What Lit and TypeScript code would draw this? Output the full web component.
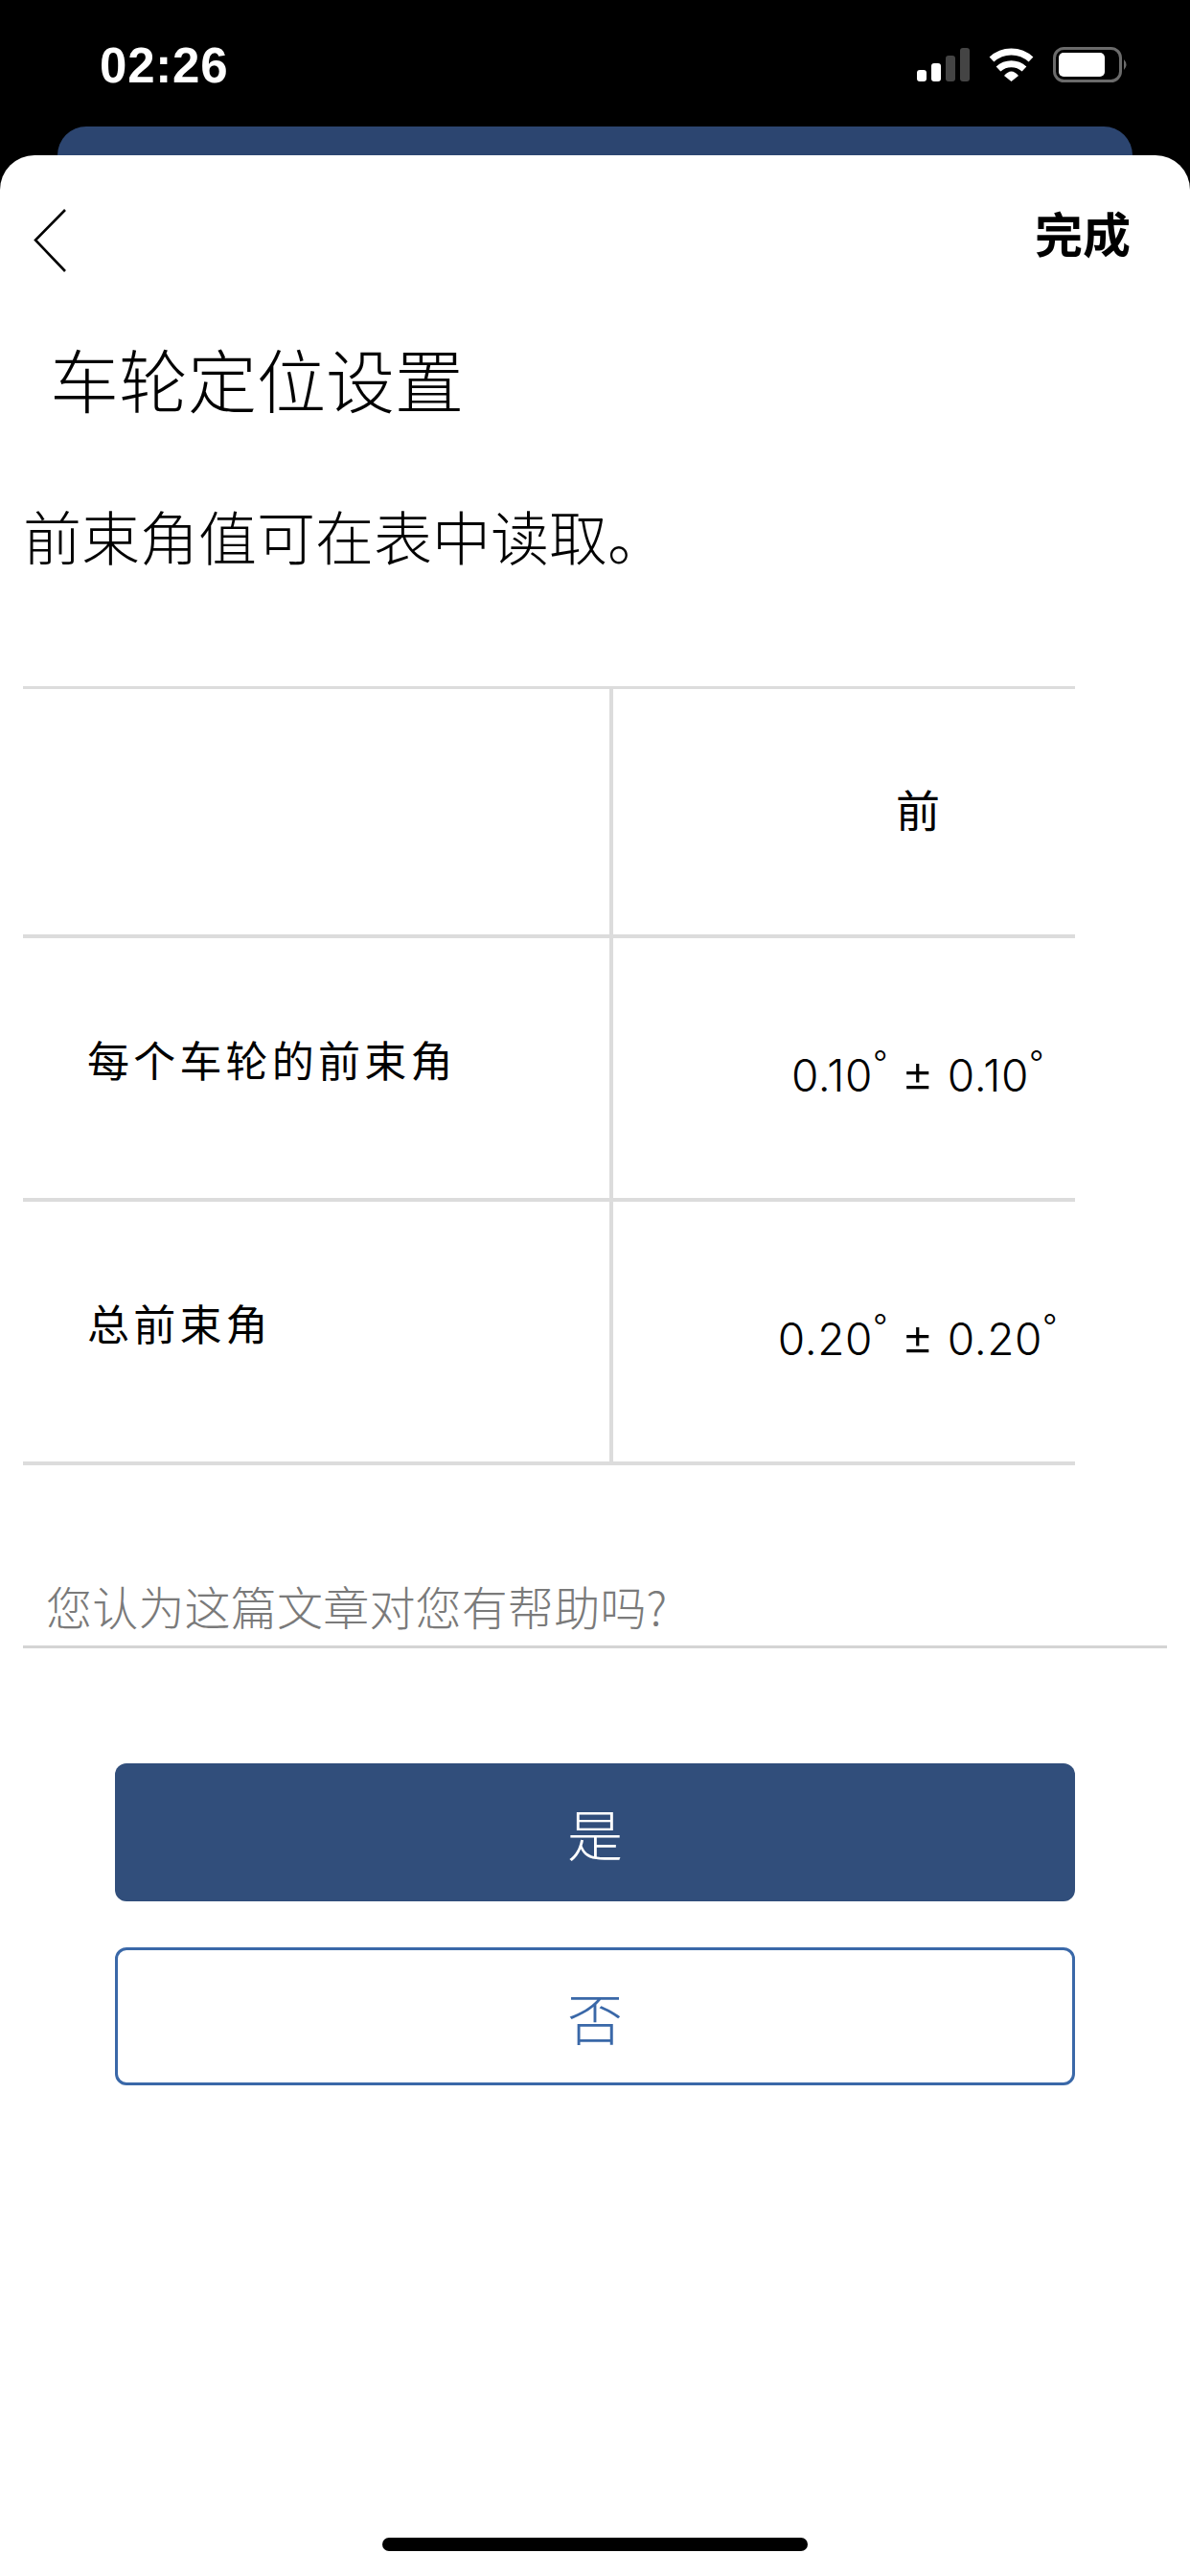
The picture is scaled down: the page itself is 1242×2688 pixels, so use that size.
import { LitElement, html, css } from "lit";
import { customElement } from "lit/decorators.js";

const statusIcons = html`<svg class="status-icons" width="221" height="37" viewBox="0 0 221 37">
  <rect x="0" y="24" width="10" height="12" rx="3" fill="#fff" />
  <rect x="15" y="17" width="10" height="19" rx="3" fill="#fff" />
  <rect x="30" y="9" width="10" height="27" rx="3" fill="#444" />
  <rect x="45" y="1" width="10" height="35" rx="3" fill="#444" />
  <path d="M78 13 A30 30 0 0 1 119 13" fill="none" stroke="#fff" stroke-width="7" />
  <path d="M85 23 A20 20 0 0 1 112 23" fill="none" stroke="#fff" stroke-width="7" />
  <path d="M91 30 Q98.5 21 106 30 L98.5 36 Z" fill="#fff" />
  <rect x="143.500" y="1.500" width="69" height="34" rx="10" fill="none" stroke="#6b6b6b" stroke-width="3" />
  <rect x="148" y="6" width="48" height="25" rx="5" fill="#fff" />
  <path d="M216 13 Q221 18.500 216 24 Z" fill="#6b6b6b" />
</svg>`;

const backIcon = html`<svg width="34" height="66" viewBox="0 0 34 66">
  <path d="M33 1 L2 32.500 L33 65" fill="none" stroke="#000" stroke-width="2.600" />
</svg>`;

const rows = [
  { label: "每个车轮的前束角", value: "0.10", spread: "0.10" },
  { label: "总前束角", value: "0.20", spread: "0.20" },
];

@customElement("app-root")
export class AppRoot extends LitElement {
  static styles = css`
    :host {
      display: block;
      width: 1242px;
      height: 2688px;
      background: #000;
      font-family: "Noto Sans CJK SC", "Liberation Sans", sans-serif;
      color: #000;
      overflow: hidden;
    }
    .status {
      height: 132px;
      box-sizing: border-box;
      display: flex;
      justify-content: space-between;
      padding: 49px 64px 0 104px;
    }
    .time {
      font-family: "Liberation Sans", sans-serif;
      font-size: 51px;
      line-height: 39px;
      font-weight: 700;
      color: #fff;
      letter-spacing: 0.8px;
    }
    .status-icons {
      display: block;
    }
    .peek {
      height: 30px;
      margin: 0 60px;
      background: #2c4570;
      border-radius: 30px 30px 0 0;
    }
    .sheet {
      height: 2526px;
      box-sizing: border-box;
      background: #fff;
      border-radius: 36px 36px 0 0;
      position: relative;
      padding-top: 56px;
    }
    .nav {
      display: flex;
      justify-content: space-between;
      align-items: flex-start;
      height: 66px;
      padding: 0 62px 0 35px;
    }
    .done {
      font-size: 50px;
      font-weight: 700;
      line-height: 48px;
    }
    h1 {
      margin: 68px 0 0 52px;
      font-size: 72px;
      font-weight: 300;
      line-height: 84px;
    }
    .lead {
      margin: 87px 0 0 24px;
      font-size: 61px;
      font-weight: 300;
      line-height: 72px;
    }
    .table {
      margin: 121px 0 0 24px;
      width: 1098px;
      border-top: 3px solid #dcdcdc;
    }
    .row {
      display: grid;
      grid-template-columns: 616px 482px;
      border-bottom: 4px solid #dcdcdc;
    }
    .row.head {
      height: 256px;
    }
    .row.body {
      height: 271px;
    }
    .cell-label {
      border-right: 4px solid #dcdcdc;
      padding: 96px 0 0 67px;
      font-size: 44px;
      font-weight: 400;
      letter-spacing: 4.200px;
      line-height: 60px;
    }
    .cell-value {
      padding-left: 154px;
      text-align: center;
      font-size: 44px;
    }
    .head .cell-value {
      font-size: 46px;
      line-height: 249px;
    }
    .body .cell-value {
      font-family: "Inter", "Liberation Sans", sans-serif;
      font-weight: 300;
      font-size: 46px;
      letter-spacing: 0.6px;
      line-height: 60px;
      padding-top: 113px;
      white-space: nowrap;
    }
    .deg {
      font-size: 34px;
      position: relative;
      top: -18px;
    }
    .pm {
      font-size: 52px;
      line-height: 1;
    }
    .question {
      margin: 117px 0 0 24px;
      width: 1194px;
      box-sizing: border-box;
      padding-left: 24px;
      height: 74px;
      border-bottom: 3px solid #d4d4d4;
      font-size: 48px;
      font-weight: 300;
      letter-spacing: 0.2px;
      line-height: 58px;
      color: #7a7a7a;
    }
    .actions {
      margin: 120px 120px 0 120px;
      display: flex;
      flex-direction: column;
      gap: 48px;
    }
    .btn {
      height: 144px;
      box-sizing: border-box;
      border-radius: 12px;
      display: flex;
      align-items: center;
      justify-content: center;
      font-size: 58px;
      font-weight: 300;
    }
    .btn.yes {
      background: #314e7b;
      color: #fff;
    }
    .btn.no {
      background: #fff;
      border: 3px solid #3a68a8;
      color: #3a68a8;
    }
    .home {
      position: absolute;
      left: 399px;
      top: 2486px;
      width: 444px;
      height: 14px;
      border-radius: 7px;
      background: #000;
    }
  `;

  render() {
    return html`
      <div class="status">
        <span class="time">02:26</span>
        ${statusIcons}
      </div>
      <div class="peek"></div>
      <div class="sheet">
        <div class="nav">
          ${backIcon}
          <span class="done">完成</span>
        </div>
        <h1>车轮定位设置</h1>
        <p class="lead">前束角值可在表中读取。</p>
        <div class="table">
          <div class="row head">
            <div class="cell-label"></div>
            <div class="cell-value">前</div>
          </div>
          ${rows.map(
            (r) => html`<div class="row body">
              <div class="cell-label">${r.label}</div>
              <div class="cell-value">
                ${r.value}<span class="deg">°</span> <span class="pm">±</span> ${r.spread}<span class="deg">°</span>
              </div>
            </div>`
          )}
        </div>
        <div class="question">您认为这篇文章对您有帮助吗?</div>
        <div class="actions">
          <div class="btn yes">是</div>
          <div class="btn no">否</div>
        </div>
        <div class="home"></div>
      </div>
    `;
  }
}
